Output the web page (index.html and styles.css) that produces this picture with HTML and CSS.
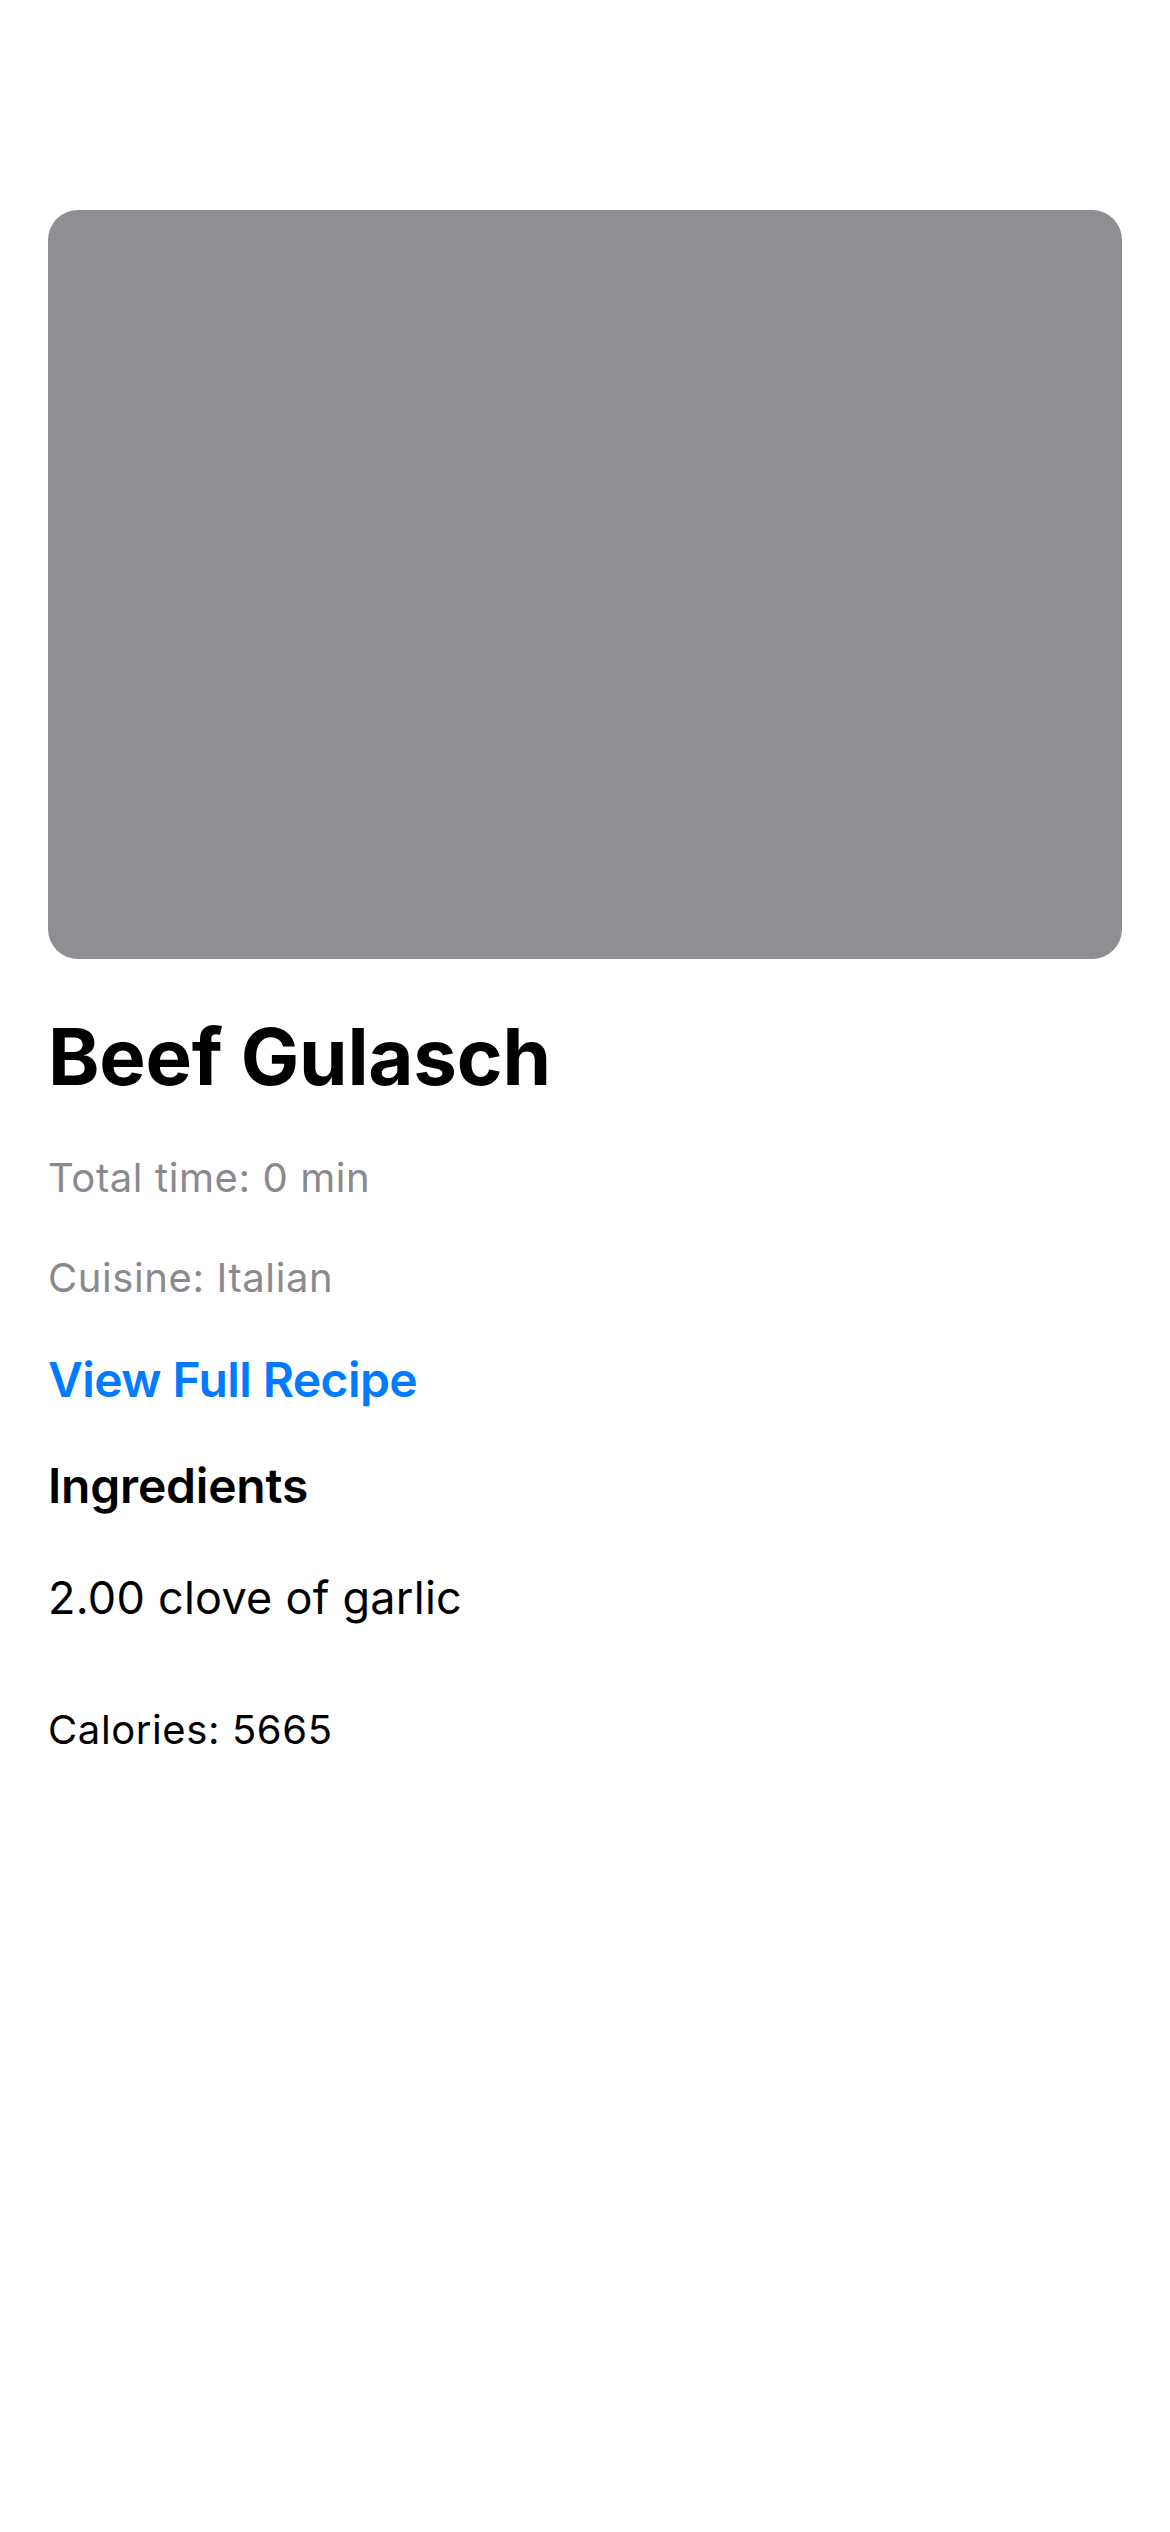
FILE: index.html
```html
<!DOCTYPE html>
<html lang="en">
<head>
<meta charset="utf-8">
<title>Beef Gulasch</title>
<link rel="stylesheet" href="styles.css">
</head>
<body>
<main class="recipe">
  <div class="photo"></div>
  <h1 class="title">Beef Gulasch</h1>
  <p class="meta meta-time">Total time: 0 min</p>
  <p class="meta meta-cuisine">Cuisine: Italian</p>
  <a class="link" href="#">View Full Recipe</a>
  <h2 class="section">Ingredients</h2>
  <ul class="ingredients">
    <li class="ingredient">2.00 clove of garlic</li>
  </ul>
  <p class="calories">Calories: 5665</p>
</main>
</body>
</html>
```
FILE: styles.css
```css
html, body {
  margin: 0;
  padding: 0;
  background: #ffffff;
}
body {
  font-family: Inter, "Noto Sans", "Liberation Sans", sans-serif;
  color: #000000;
}
.recipe {
  display: flex;
  flex-direction: column;
  align-items: flex-start;
  padding: 210px 48px 0 48px;
}
.photo {
  align-self: stretch;
  height: 749px;
  background: #8e8e93;
  border-radius: 30px;
}
.title, .meta, .link, .section, .ingredients, .calories {
  margin: 0;
  line-height: 1.2;
}
.title {
  margin-top: 51px;
  font-size: 78px;
  font-weight: 700;
  letter-spacing: -0.25px;
}
.meta {
  font-size: 40px;
  color: #8a8a8e;
  font-weight: 400;
  letter-spacing: 0.6px;
}
.meta-time { margin-top: 50px; }
.meta-cuisine { margin-top: 52px; }
.link {
  margin-top: 49px;
  font-size: 48px;
  font-weight: 600;
  color: #007aff;
  text-decoration: none;
  letter-spacing: -0.6px;
}
.section {
  margin-top: 49px;
  font-size: 48px;
  font-weight: 600;
  letter-spacing: -0.2px;
}
.ingredients {
  list-style: none;
  padding: 0;
  margin-top: 56px;
}
.ingredient {
  font-size: 45px;
  letter-spacing: 0.25px;
}
.calories {
  margin-top: 81px;
  font-size: 40px;
  letter-spacing: 0.6px;
}
```
